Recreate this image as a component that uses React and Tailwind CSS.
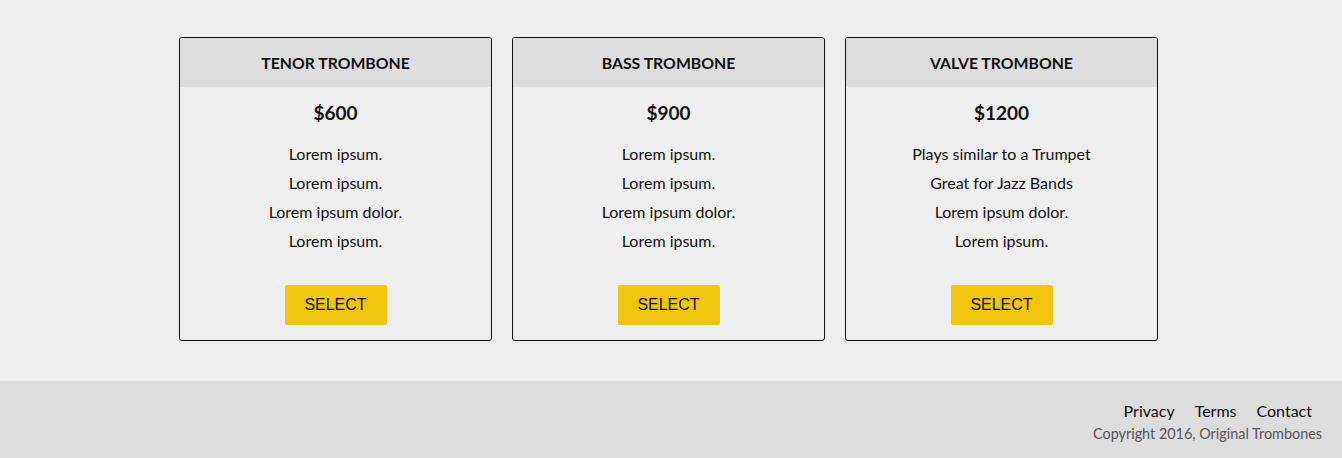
export default function App() {
  const cards = [
    { title: "TENOR TROMBONE", price: "$600", lines: ["Lorem ipsum.", "Lorem ipsum.", "Lorem ipsum dolor.", "Lorem ipsum."] },
    { title: "BASS TROMBONE", price: "$900", lines: ["Lorem ipsum.", "Lorem ipsum.", "Lorem ipsum dolor.", "Lorem ipsum."] },
    { title: "VALVE TROMBONE", price: "$1200", lines: ["Plays similar to a Trumpet", "Great for Jazz Bands", "Lorem ipsum dolor.", "Lorem ipsum."] },
  ];
  return (
    <div className="min-h-[458px] bg-[#eeeeee] flex flex-col text-[#111]" style={{ fontFamily: "Lato, 'Open Sans', sans-serif" }}>
      <div className="pt-[37px] pl-[179px] flex gap-[20px]">
        {cards.map((c) => (
          <div key={c.title} className="w-[313px] h-[304px] border border-[#111] rounded-[3px] overflow-hidden flex flex-col items-center">
            <div className="w-full h-[49px] pt-[1px] bg-[#dddddd] flex items-center justify-center text-[15.8px] font-bold">{c.title}</div>
            <div className="mt-[14px] text-[19px] leading-[24px] font-bold">{c.price}</div>
            <div className="mt-[14px] flex flex-col items-center text-[16px] leading-[29px]">
              {c.lines.map((l, i) => (
                <div key={i}>{l}</div>
              ))}
            </div>
            <button className="mt-[30px] w-[102px] h-[40px] bg-[#f1c40f] rounded-[2px] text-[16px] text-[#111]" style={{ fontFamily: "'Liberation Sans', Arial, sans-serif" }}>
              SELECT
            </button>
          </div>
        ))}
      </div>
      <footer className="mt-[40px] h-[77px] bg-[#dddddd] flex flex-col items-end pr-[20px] pt-[20px]">
        <div className="flex text-[16px] leading-[20px] text-[#111]">
          <a className="px-[10px]">Privacy</a>
          <a className="px-[10px]">Terms</a>
          <a className="px-[10px]">Contact</a>
        </div>
        <div className="mt-[3px] text-[14.4px] leading-[20px] text-[#555]">Copyright 2016, Original Trombones</div>
      </footer>
    </div>
  );
}
